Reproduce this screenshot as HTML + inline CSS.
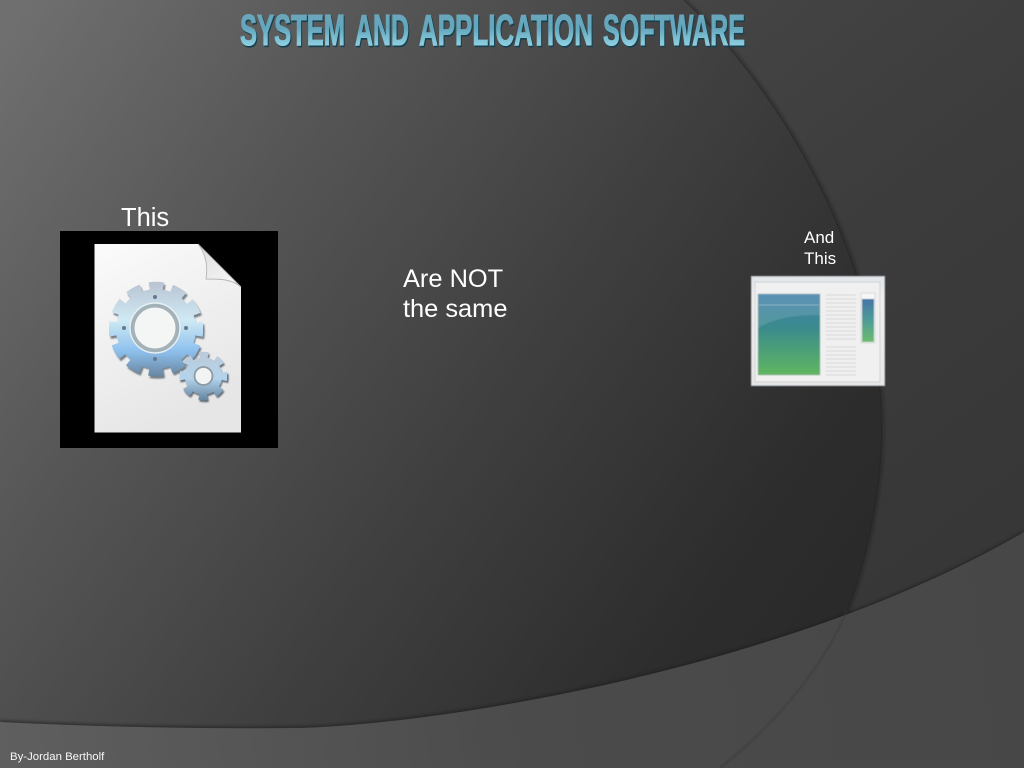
<!DOCTYPE html>
<html lang="en">
<head>
<meta charset="utf-8">
<title>System and Application Software</title>
<style>
html,body{margin:0;padding:0;background:#3c3c3c;}
body{width:1024px;height:768px;overflow:hidden;}
svg{display:block;}
text{font-family:"Liberation Sans",Arial,sans-serif;fill:#fff;}
</style>
</head>
<body>
<svg width="1024" height="768" viewBox="0 0 1024 768" xmlns="http://www.w3.org/2000/svg">
<defs>
<linearGradient id="outer" gradientUnits="userSpaceOnUse" x1="640" y1="0" x2="1024" y2="500">
<stop offset="0" stop-color="#464646"/><stop offset=".5" stop-color="#3c3c3c"/><stop offset="1" stop-color="#373737"/>
</linearGradient>
<linearGradient id="blob" gradientUnits="userSpaceOnUse" x1="0" y1="40" x2="860" y2="640">
<stop offset="0" stop-color="#6f6f6f"/><stop offset=".28" stop-color="#565656"/><stop offset=".58" stop-color="#3f3f3f"/><stop offset=".85" stop-color="#2d2d2d"/><stop offset="1" stop-color="#292929"/>
</linearGradient>
<linearGradient id="band" gradientUnits="userSpaceOnUse" x1="0" y1="740" x2="1024" y2="600">
<stop offset="0" stop-color="#5f5f5f"/><stop offset=".5" stop-color="#4b4b4b"/><stop offset="1" stop-color="#474747"/>
</linearGradient>
<linearGradient id="title" gradientUnits="userSpaceOnUse" x1="0" y1="14" x2="0" y2="46">
<stop offset="0" stop-color="#6aa6bc"/><stop offset=".45" stop-color="#64a6bc"/><stop offset=".7" stop-color="#78bbcf"/><stop offset="1" stop-color="#90d0e2"/>
</linearGradient>
<linearGradient id="doc" x1="0" y1="0" x2=".4" y2="1">
<stop offset="0" stop-color="#fbfbfb"/><stop offset=".5" stop-color="#f0f0f1"/><stop offset="1" stop-color="#e6e6e7"/>
</linearGradient>
<linearGradient id="fold" x1="0" y1="0" x2="1" y2="1">
<stop offset="0" stop-color="#dcdcdc"/><stop offset="1" stop-color="#fbfbfb"/>
</linearGradient>
<linearGradient id="g1" gradientUnits="userSpaceOnUse" x1="155" y1="282" x2="155" y2="377">
<stop offset="0" stop-color="#b9c3d2"/><stop offset=".4" stop-color="#cfeaf4"/><stop offset=".72" stop-color="#8fc1ee"/><stop offset="1" stop-color="#66859f"/>
</linearGradient>
<linearGradient id="g2" gradientUnits="userSpaceOnUse" x1="203" y1="352" x2="203" y2="400">
<stop offset="0" stop-color="#bcc9d8"/><stop offset=".55" stop-color="#b3d4ec"/><stop offset="1" stop-color="#66859f"/>
</linearGradient>
<linearGradient id="win" x1="0" y1="0" x2="0" y2="1">
<stop offset="0" stop-color="#4280ab"/><stop offset=".4" stop-color="#3a8a8e"/><stop offset="1" stop-color="#5fb660"/>
</linearGradient>
<linearGradient id="strip" x1="0" y1="0" x2="0" y2="1">
<stop offset="0" stop-color="#4575a8"/><stop offset=".5" stop-color="#4f9c96"/><stop offset="1" stop-color="#6dbb70"/>
</linearGradient>
<linearGradient id="winbar" x1="0" y1="0" x2="0" y2="1">
<stop offset="0" stop-color="#e2e6ea"/><stop offset=".2" stop-color="#f0f0f0"/><stop offset="1" stop-color="#e8e8e8"/>
</linearGradient>
<filter id="b6" x="-20%" y="-20%" width="140%" height="140%"><feGaussianBlur stdDeviation="2"/></filter>
<filter id="b1" x="-20%" y="-20%" width="140%" height="140%"><feGaussianBlur stdDeviation=".7"/></filter>
<filter id="b2" x="-20%" y="-20%" width="140%" height="140%"><feGaussianBlur stdDeviation="1.2"/></filter>
<filter id="bt" x="-5%" y="-20%" width="110%" height="140%"><feGaussianBlur stdDeviation=".35"/></filter>
<filter id="bw" x="-5%" y="-5%" width="110%" height="110%"><feGaussianBlur stdDeviation=".55"/></filter>
<clipPath id="pg"><rect width="1024" height="768"/></clipPath>
</defs>

<g clip-path="url(#pg)">
<rect width="1024" height="768" fill="url(#outer)"/>
<path d="M0 0H683C760 70 881 240 881 430C881 490 866 560 847 610L847 768H0Z" fill="#161616" opacity=".7" filter="url(#b6)" transform="translate(1.500,0)"/>
<path d="M0 0H683C760 70 881 240 881 430C881 490 866 560 847 610L800 768H0Z" fill="url(#blob)"/>
<path d="M0 722C100 727 200 729 300 728C440 724 790 669 1024 532V768H0Z" fill="#1e1e1e" opacity=".55" filter="url(#b2)" transform="translate(0,-2)"/>
<path d="M0 722C100 727 200 729 300 728C440 724 790 669 1024 532V768H0Z" fill="url(#band)"/>
<path d="M847 610C825 665 775 725 720 768" fill="none" stroke="#3a3a3a" stroke-width="1.5" opacity=".7" filter="url(#b1)"/>

<!-- Title -->
<g font-weight="700" font-size="44" stroke-linejoin="miter" filter="url(#bt)">
<g stroke="#17414f" stroke-width="1.300">
<text x="241" y="46.500" textLength="105" lengthAdjust="spacingAndGlyphs" style="fill:#17414f">SYSTEM</text>
<text x="356" y="46.500" textLength="54" lengthAdjust="spacingAndGlyphs" style="fill:#17414f">AND</text>
<text x="420" y="46.500" textLength="174" lengthAdjust="spacingAndGlyphs" style="fill:#17414f">APPLICATION</text>
<text x="604" y="46.500" textLength="142" lengthAdjust="spacingAndGlyphs" style="fill:#17414f">SOFTWARE</text>
</g>
<g stroke="url(#title)" stroke-width="1.100">
<text x="240" y="45" textLength="105" lengthAdjust="spacingAndGlyphs" style="fill:url(#title)">SYSTEM</text>
<text x="355" y="45" textLength="54" lengthAdjust="spacingAndGlyphs" style="fill:url(#title)">AND</text>
<text x="419" y="45" textLength="174" lengthAdjust="spacingAndGlyphs" style="fill:url(#title)">APPLICATION</text>
<text x="603" y="45" textLength="142" lengthAdjust="spacingAndGlyphs" style="fill:url(#title)">SOFTWARE</text>
</g>
</g>

<!-- Labels -->
<text x="121" y="226" font-size="25.500">This</text>
<text x="403" y="287" font-size="25.400">Are NOT</text>
<text x="403" y="317" font-size="25.400">the same</text>
<text x="804" y="243" font-size="17">And</text>
<text x="804" y="264" font-size="17">This</text>
<text x="10" y="760" font-size="11.400" fill-opacity=".95">By-Jordan Bertholf</text>

<!-- Document icon -->
<rect x="60" y="231" width="218" height="217" fill="#000"/>
<path d="M94.500 244H198L241 287V432.500H94.500Z" fill="url(#doc)"/>
<path d="M198 244C206 254 208 266 206 279C220 279 232 279 241 287Z" fill="url(#fold)" stroke="#b5b5b5" stroke-width=".9" filter="url(#bt)"/>

<!-- Large gear -->
<g transform="translate(1.500,2.500)" opacity=".7" filter="url(#b1)">
<circle cx="156" cy="329" r="31.500" fill="none" stroke="#46525e" stroke-width="15"/>
<circle cx="156" cy="329" r="42.500" fill="none" stroke="#46525e" stroke-width="9.500" stroke-dasharray="14 8.253" stroke-dashoffset="7"/>
</g>
<g filter="url(#bt)">
<circle cx="156" cy="329" r="32" fill="none" stroke="url(#g1)" stroke-width="16"/>
<circle cx="156" cy="329" r="42.500" fill="none" stroke="url(#g1)" stroke-width="9.500" stroke-dasharray="14 8.253" stroke-dashoffset="7"/>
<circle cx="155" cy="328" r="22.500" fill="#f4f5f5" stroke="#a3b2b8" stroke-width="4"/>
<circle cx="155" cy="328" r="25" fill="none" stroke="#e7f0f3" stroke-width="1.400"/>
</g>
<g fill="#66798c">
<circle cx="155" cy="297" r="2"/><circle cx="155" cy="359" r="2"/><circle cx="124" cy="328" r="2"/><circle cx="186" cy="328" r="2"/>
</g>

<!-- Small gear -->
<g transform="translate(1,2)" opacity=".75" filter="url(#b1)">
<circle cx="203.500" cy="376" r="14" fill="none" stroke="#3a4752" stroke-width="9"/>
<circle cx="203.500" cy="376" r="21" fill="none" stroke="#3a4752" stroke-width="6.500" stroke-dasharray="8.500 7.990" stroke-dashoffset="4"/>
</g>
<g filter="url(#bt)">
<circle cx="203.500" cy="376" r="14" fill="none" stroke="url(#g2)" stroke-width="9.500"/>
<circle cx="203.500" cy="376" r="21" fill="none" stroke="url(#g2)" stroke-width="6.500" stroke-dasharray="8.500 7.990" stroke-dashoffset="4"/>
<circle cx="203.500" cy="376" r="9" fill="#f2f3f3" stroke="#8b9aa3" stroke-width="1.800"/>
</g>

<!-- Window icon -->
<g filter="url(#bw)">
<rect x="751" y="276" width="134" height="110" fill="#c9ced2"/>
<rect x="752" y="277" width="132" height="108" fill="url(#winbar)"/>
<rect x="755" y="282" width="125" height="100" fill="#f0f0f0" stroke="#bfc3c5" stroke-width=".7"/>
<rect x="758" y="294" width="62" height="81" fill="url(#win)" stroke="#9db2aa" stroke-width=".5"/>
<path d="M758 328C775 318 795 315 820 315V294H758Z" fill="#fff" opacity=".13"/>
<path d="M759 305H819" stroke="#fff" opacity=".3"/>
<g stroke="#d6d6d6" stroke-width=".9">
<path d="M826 295H856M826 299H856M826 303H856M826 307H856M826 311H856M826 315H856M826 319H856M826 323H856M826 327H856M826 331H856M826 335H856M826 339H856"/>
<path d="M826 347H856M826 351H856M826 355H856M826 359H856M826 363H856M826 367H856M826 371H856M826 375H856"/>
</g>
<rect x="861" y="293" width="14" height="50" fill="#f7f7f7" stroke="#c4cccc" stroke-width=".6"/>
<rect x="862" y="299" width="12" height="43" fill="url(#strip)"/>
</g>
</g>
</svg>
</body>
</html>
